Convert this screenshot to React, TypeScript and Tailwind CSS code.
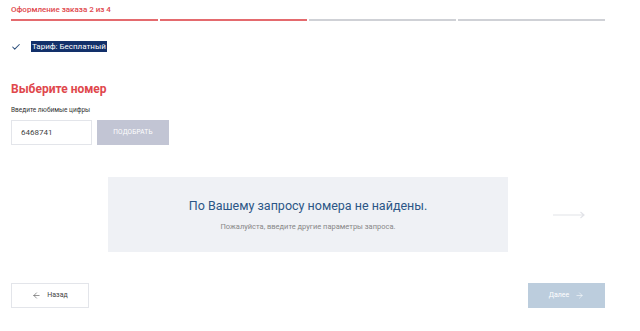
import { ArrowLeft, ArrowRight, Check } from "lucide-react";

const steps = [true, true, false, false];

export default function App() {
  return (
    <div
      className="w-[640px] h-[331px] bg-white px-[11px] text-[#333]"
      style={{ fontFamily: "Roboto, 'Noto Sans', sans-serif" }}
    >
      <div className="w-[594px]">
        <div className="pt-[4px] text-[8px] font-medium leading-[12px] text-[#e0474c]">
          Оформление заказа 2 из 4
        </div>
        <div className="mt-[3px] grid grid-cols-4 gap-[2px]">
          {steps.map((done, i) => (
            <div
              key={i}
              className={done ? "h-[2px] bg-[#e46a6e]" : "h-[2px] bg-[#cfd1d6]"}
            />
          ))}
        </div>

        <div className="mt-[20px] flex items-center gap-[10px]">
          <Check className="h-[10px] w-[10px] text-[#2c4f7c]" strokeWidth={2.5} />
          <span className="bg-[#12306a] px-[1px] text-[8px] leading-[11px] text-white">
            Тариф: Бесплатный
          </span>
        </div>

        <h2 className="mt-[29px] text-[12px] font-bold leading-[16px] text-[#e0474c]">
          Выберите номер
        </h2>
        <div className="mt-[9px] text-[6.5px] leading-[8px] text-[#333]">
          Введите любимые цифры
        </div>

        <div className="mt-[6px] flex gap-[5px]">
          <div className="flex h-[25px] w-[81px] items-center border border-[#e3e5ea] px-[9px] text-[8px] text-[#444]">
            6468741
          </div>
          <button className="h-[25px] w-[72px] bg-[#c2c5d4] text-[6.5px] tracking-wide text-white">
            ПОДОБРАТЬ
          </button>
        </div>

        <div className="mt-[32px] flex items-center">
          <div className="ml-[97px] flex h-[75px] w-[400px] flex-col items-center justify-center bg-[#eff1f5]">
            <div className="text-[12.5px] leading-[16px] text-[#2b5686]">
              По Вашему запросу номера не найдены.
            </div>
            <div className="mt-[8px] text-[7.5px] leading-[9px] text-[#888]">
              Пожалуйста, введите другие параметры запроса.
            </div>
          </div>
          <div className="flex flex-1 justify-end pr-[20px]">
            <svg width="32" height="8" viewBox="0 0 32 8" fill="none" stroke="#e2e3e8" strokeWidth="1.2">
              <path d="M0 4H31M27.5 1L31 4L27.5 7" />
            </svg>
          </div>
        </div>

        <div className="mt-[31px] flex justify-between">
          <button className="flex h-[25px] w-[78px] items-center justify-center gap-[6px] border border-[#e3e5ea] text-[7px] text-[#444]">
            <ArrowLeft className="h-[9px] w-[9px]" strokeWidth={1.5} />
            Назад
          </button>
          <button className="flex h-[25px] w-[77px] items-center justify-center gap-[6px] bg-[#bccddd] text-[7px] text-white">
            Далее
            <ArrowRight className="h-[9px] w-[9px]" strokeWidth={1.5} />
          </button>
        </div>
      </div>
    </div>
  );
}
